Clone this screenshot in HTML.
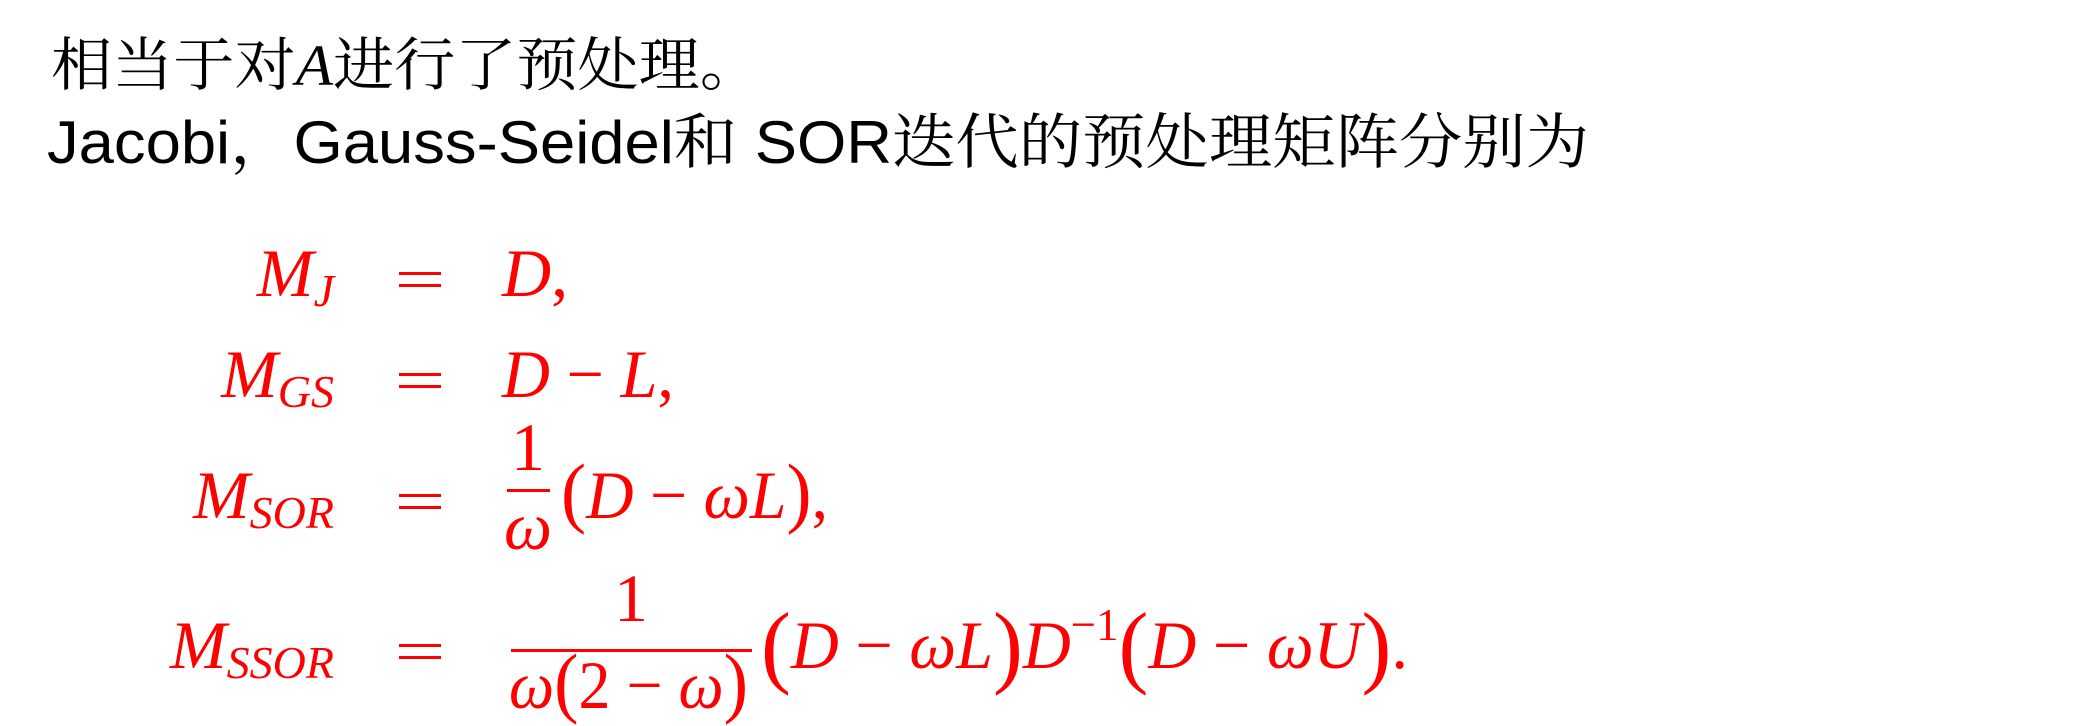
<!DOCTYPE html>
<html><head><meta charset="utf-8"><style>
html,body{margin:0;padding:0;background:#fff;width:2094px;height:726px;overflow:hidden}
svg{display:block}
.cj{font-family:"Liberation Serif","Noto Serif CJK SC",serif}
.ln{font-family:"Liberation Sans","Noto Serif CJK SC",sans-serif}
.m{font-family:"Liberation Serif",serif;font-style:italic;fill:#ff0000}
.n{font-family:"Liberation Serif",serif;fill:#ff0000}
</style></head><body>
<svg width="2094" height="726" viewBox="0 0 2094 726" xmlns="http://www.w3.org/2000/svg">
<text class="cj" x="51" y="85" font-size="58" textLength="710" lengthAdjust="spacingAndGlyphs">相当于对<tspan font-style="italic">A</tspan>进行了预处理。</text>
<text class="ln" x="47" y="163" font-size="60" textLength="1542" lengthAdjust="spacingAndGlyphs">Jacobi，Gauss-Seidel<tspan font-family="Noto Serif CJK SC, serif">和</tspan> SOR<tspan font-family="Noto Serif CJK SC, serif">迭代的预处理矩阵分别为</tspan></text>

<g fill="#ff0000">
<rect x="399" y="272" width="42" height="3"/><rect x="399" y="284" width="42" height="3"/>
<rect x="399" y="373" width="42" height="3"/><rect x="399" y="385" width="42" height="3"/>
<rect x="399" y="494" width="42" height="3"/><rect x="399" y="506" width="42" height="3"/>
<rect x="399" y="644" width="42" height="3"/><rect x="399" y="656" width="42" height="3"/>
</g>

<!-- row 1 -->
<text class="m" x="334" y="296" font-size="68" text-anchor="end">M<tspan font-size="46" dy="10">J</tspan></text>
<text class="m" x="502" y="296" font-size="68">D<tspan font-style="normal">,</tspan></text>

<!-- row 2 -->
<text class="m" x="334" y="397" font-size="68" text-anchor="end">M<tspan font-size="46" dy="10">GS</tspan></text>
<text class="m" x="502" y="397" font-size="68" textLength="172" lengthAdjust="spacingAndGlyphs">D <tspan font-style="normal">−</tspan> L<tspan font-style="normal">,</tspan></text>

<!-- row 3 -->
<text class="m" x="334" y="518" font-size="68" text-anchor="end">M<tspan font-size="46" dy="10">SOR</tspan></text>
<text class="n" x="528" y="470" font-size="68" text-anchor="middle">1</text>
<rect x="507" y="489" width="43" height="3" fill="#ff0000"/>
<text class="m" x="528" y="549" font-size="68" text-anchor="middle">ω</text>
<text class="m" x="561" y="518" font-size="68" textLength="267" lengthAdjust="spacingAndGlyphs"><tspan font-style="normal" font-size="78">(</tspan>D <tspan font-style="normal">−</tspan> ωL<tspan font-style="normal" font-size="78">)</tspan><tspan font-style="normal">,</tspan></text>

<!-- row 4 -->
<text class="m" x="334" y="668" font-size="68" text-anchor="end">M<tspan font-size="46" dy="10">SSOR</tspan></text>
<text class="n" x="631" y="621" font-size="68" text-anchor="middle">1</text>
<rect x="511" y="649" width="241" height="3" fill="#ff0000"/>
<text class="m" x="509" y="708" font-size="68" textLength="239" lengthAdjust="spacingAndGlyphs">ω<tspan font-style="normal" font-size="78">(</tspan><tspan font-style="normal">2 − </tspan>ω<tspan font-style="normal" font-size="78">)</tspan></text>
<text class="m" x="761" y="668" font-size="68" textLength="647" lengthAdjust="spacingAndGlyphs"><tspan font-style="normal" font-size="92" dy="8">(</tspan><tspan dy="-8">D </tspan><tspan font-style="normal">−</tspan> ωL<tspan font-style="normal" font-size="92" dy="8">)</tspan><tspan dy="-8">D</tspan><tspan font-style="normal" font-size="46" dy="-28">−1</tspan><tspan font-style="normal" font-size="92" dy="36">(</tspan><tspan dy="-8">D </tspan><tspan font-style="normal">−</tspan> ωU<tspan font-style="normal" font-size="92" dy="8">)</tspan><tspan font-style="normal" dy="-8">.</tspan></text>
</svg>
</body></html>
